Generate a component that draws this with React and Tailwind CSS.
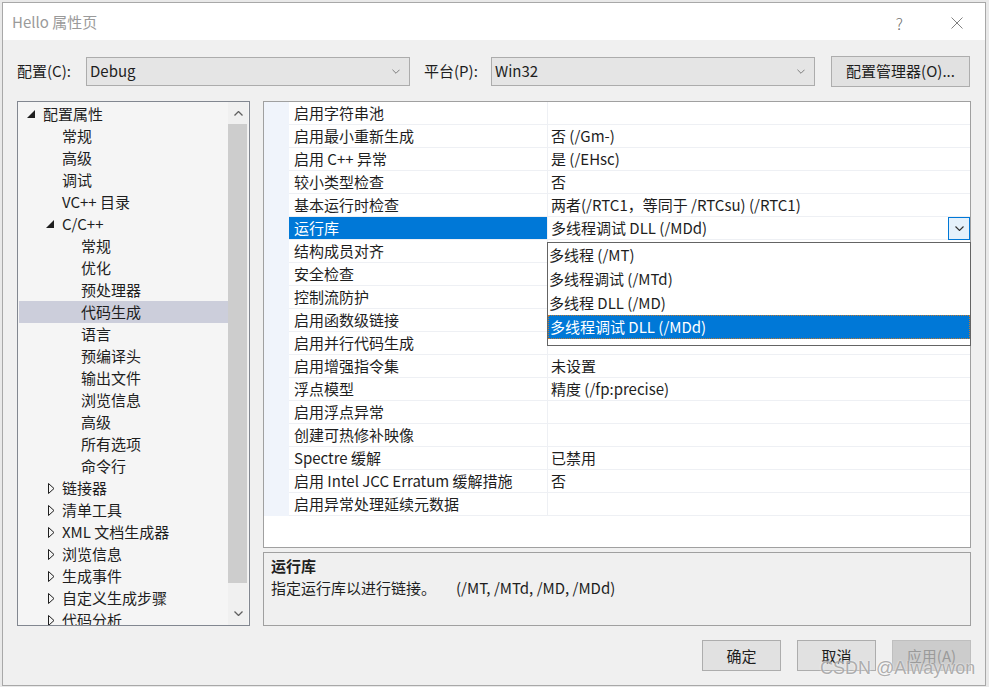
import React from "react";

const FONT = "font-['Noto_Sans_CJK_SC',sans-serif]";

const tree = [
  { t: "配置属性", l: 0, tri: "open" },
  { t: "常规", l: 1 },
  { t: "高级", l: 1 },
  { t: "调试", l: 1 },
  { t: "VC++ 目录", l: 1 },
  { t: "C/C++", l: 1, tri: "open" },
  { t: "常规", l: 2 },
  { t: "优化", l: 2 },
  { t: "预处理器", l: 2 },
  { t: "代码生成", l: 2, sel: true },
  { t: "语言", l: 2 },
  { t: "预编译头", l: 2 },
  { t: "输出文件", l: 2 },
  { t: "浏览信息", l: 2 },
  { t: "高级", l: 2 },
  { t: "所有选项", l: 2 },
  { t: "命令行", l: 2 },
  { t: "链接器", l: 1, tri: "closed" },
  { t: "清单工具", l: 1, tri: "closed" },
  { t: "XML 文档生成器", l: 1, tri: "closed" },
  { t: "浏览信息", l: 1, tri: "closed" },
  { t: "生成事件", l: 1, tri: "closed" },
  { t: "自定义生成步骤", l: 1, tri: "closed" },
  { t: "代码分析", l: 1, tri: "closed" },
];

const props = [
  ["启用字符串池", ""],
  ["启用最小重新生成", "否 (/Gm-)"],
  ["启用 C++ 异常", "是 (/EHsc)"],
  ["较小类型检查", "否"],
  ["基本运行时检查", "两者(/RTC1，等同于 /RTCsu) (/RTC1)"],
  ["运行库", "多线程调试 DLL (/MDd)", true],
  ["结构成员对齐", ""],
  ["安全检查", ""],
  ["控制流防护", ""],
  ["启用函数级链接", ""],
  ["启用并行代码生成", ""],
  ["启用增强指令集", "未设置"],
  ["浮点模型", "精度 (/fp:precise)"],
  ["启用浮点异常", ""],
  ["创建可热修补映像", ""],
  ["Spectre 缓解", "已禁用"],
  ["启用 Intel JCC Erratum 缓解措施", "否"],
  ["启用异常处理延续元数据", ""],
];

const options = [
  "多线程 (/MT)",
  "多线程调试 (/MTd)",
  "多线程 DLL (/MD)",
  "多线程调试 DLL (/MDd)",
];

function Tri({ type }) {
  if (type === "open")
    return (
      <svg width="8" height="8" className="ml-[3px]">
        <polygon points="8,0 8,8 0,8" fill="#1e1e1e" />
      </svg>
    );
  if (type === "closed")
    return (
      <svg width="7" height="11" className="ml-[5px]">
        <polygon points="0.5,0.5 6,5.5 0.5,10.5" fill="none" stroke="#1e1e1e" />
      </svg>
    );
  return null;
}

function Chevron({ up, color = "#606060", w = 9, h = 5, sw = 1.3 }) {
  return (
    <svg width={w} height={h} viewBox="0 0 9 5">
      {up ? (
        <polyline points="0.5,4.5 4.5,0.5 8.5,4.5" fill="none" stroke={color} strokeWidth={sw} />
      ) : (
        <polyline points="0.5,0.5 4.5,4.5 8.5,0.5" fill="none" stroke={color} strokeWidth={sw} />
      )}
    </svg>
  );
}

function Select({ value }) {
  return (
    <div className="flex h-[29px] w-[324px] shrink-0 items-center justify-between border border-[#acacac] bg-[#e5e5e5] pl-[3px] pr-[9px] text-[15px] text-[#1e1e1e]">
      <span className="pt-px">{value}</span>
      <Chevron w={8} h={5} color="#707070" sw={1} />
    </div>
  );
}

export default function App() {
  return (
    <div className={`${FONT} h-[687px] w-[989px] overflow-hidden bg-[#e9e9e9] pl-[2px] pt-[2px]`}>
      <div className="relative flex h-[684px] w-[984px] flex-col border border-[#a8a8a8] bg-[#f0f0f0]">
        {/* title bar */}
        <div className="flex h-[37px] shrink-0 items-center justify-between bg-white pl-[9px] pr-[22px] pt-[2px]">
          <span className="text-[15px] text-[#9a9a9a]">Hello 属性页</span>
          <div className="flex items-center gap-[48px]">
            <span className="text-[16px] font-light text-[#707070]">?</span>
            <svg width="12" height="12" viewBox="0 0 12 12">
              <path d="M0.5 0.5 L11.5 11.5 M11.5 0.5 L0.5 11.5" stroke="#808080" strokeWidth="1" />
            </svg>
          </div>
        </div>

        {/* toolbar */}
        <div className="mt-[15px] flex h-[32px] shrink-0 items-center px-[14px] text-[15px] text-[#1e1e1e]">
          <span className="w-[69px] shrink-0 pt-px">配置(C):</span>
          <Select value="Debug" />
          <span className="ml-[14px] w-[67px] shrink-0 pt-px">平台(P):</span>
          <Select value="Win32" />
          <div className="ml-[16px] flex h-[31px] w-[139px] shrink-0 items-center justify-center border border-[#adadad] bg-[#e1e1e1] pt-px">
            配置管理器(O)...
          </div>
        </div>

        {/* main */}
        <div className="mt-[14px] flex h-[525px] shrink-0 gap-[13px] px-[14px]">
          {/* tree */}
          <div className="flex h-[525px] w-[233px] shrink-0 overflow-hidden border border-[#828790] bg-[#f5f5f5]">
            <div className="h-full w-[210px] overflow-hidden pl-px pt-px text-[15px] text-[#1e1e1e]">
              {tree.map((r, i) => (
                <div
                  key={i}
                  className={`flex h-[22px] items-center ${r.sel ? "bg-[#cccedb]" : ""} ${
                    r.l === 0 ? "pl-[5px]" : r.l === 1 ? "pl-[24px]" : "pl-[43px]"
                  }`}
                >
                  <div className="flex w-[19px] items-center">
                    <Tri type={r.tri} />
                  </div>
                  <span className="whitespace-nowrap">{r.t}</span>
                </div>
              ))}
            </div>
            <div className="flex w-[20px] flex-col bg-[#f0f0f0]">
              <div className="flex h-[22px] items-center justify-center">
                <Chevron up />
              </div>
              <div className="h-[459px] w-[19px] bg-[#cdcdcd]" />
              <div className="flex flex-1 items-end justify-center pb-[9px]">
                <Chevron />
              </div>
            </div>
          </div>

          {/* right column */}
          <div className="flex flex-1 flex-col gap-[4px]">
            <div className="relative h-[447px] border border-[#a0a0a0] bg-white text-[15px] text-[#1e1e1e]">
              {props.map(([n, v, sel], i) => (
                <div key={i} className="flex h-[23px]">
                  <div className="w-[25px] bg-[#f0f4fb]" />
                  <div
                    className={`flex w-[259px] items-center whitespace-nowrap border-b border-r border-[#eef0f4] pl-[5px] pt-px ${
                      sel ? "bg-[#0078d7] text-white" : ""
                    }`}
                  >
                    {n}
                  </div>
                  <div className="flex flex-1 items-center justify-between whitespace-nowrap border-b border-[#eef0f4] pl-[3px]">
                    <span className="pt-px">{v}</span>
                    {sel && (
                      <div className="flex h-[23px] w-[22px] items-center justify-center border border-[#0078d7] bg-[#e5f1fb]">
                        <Chevron color="#303030" w={9} h={5} sw={1.1} />
                      </div>
                    )}
                  </div>
                </div>
              ))}

              {/* dropdown list */}
              <div className="absolute left-[283px] top-[140px] h-[104px] w-[424px] border border-[#646464] bg-white">
                {options.map((o, i) => (
                  <div
                    key={i}
                    className={`flex h-[24px] items-center whitespace-nowrap pl-px pt-px ${
                      i === 3 ? "border border-dotted border-[#c07a30] bg-[#0078d7] text-white" : ""
                    }`}
                  >
                    {o}
                  </div>
                ))}
              </div>
            </div>

            <div className="h-[74px] border border-[#a0a0a0] bg-[#f0f0f0] px-[7px] pt-[1px] text-[15px] text-[#1e1e1e]">
              <div className="h-[23px] font-bold leading-[23px]">运行库</div>
              <div className="flex h-[23px] items-center">
                <span>指定运行库以进行链接。</span>
                <span className="ml-[20px]">(/MT, /MTd, /MD, /MDd)</span>
              </div>
            </div>
          </div>
        </div>

        {/* buttons */}
        <div className="mt-[14px] flex shrink-0 justify-end gap-[16px] px-[14px] text-[15px]">
          <div className="flex h-[31px] w-[79px] items-center justify-center border border-[#adadad] bg-[#e1e1e1] pt-px text-[#1e1e1e]">
            确定
          </div>
          <div className="flex h-[31px] w-[79px] items-center justify-center border border-[#adadad] bg-[#e1e1e1] pt-px text-[#1e1e1e]">
            取消
          </div>
          <div className="flex h-[31px] w-[79px] items-center justify-center border border-[#bfbfbf] bg-[#cccccc] pt-px text-[#9a9a9a]">
            应用(A)
          </div>
        </div>

        {/* watermark */}
        <div className="absolute left-[817px] top-[652px] font-['Liberation_Sans',sans-serif] text-[18px] text-[#9a9a9a]/80 [text-shadow:0_0_2px_white]">
          CSDN @Alwaywon
        </div>
      </div>
    </div>
  );
}
